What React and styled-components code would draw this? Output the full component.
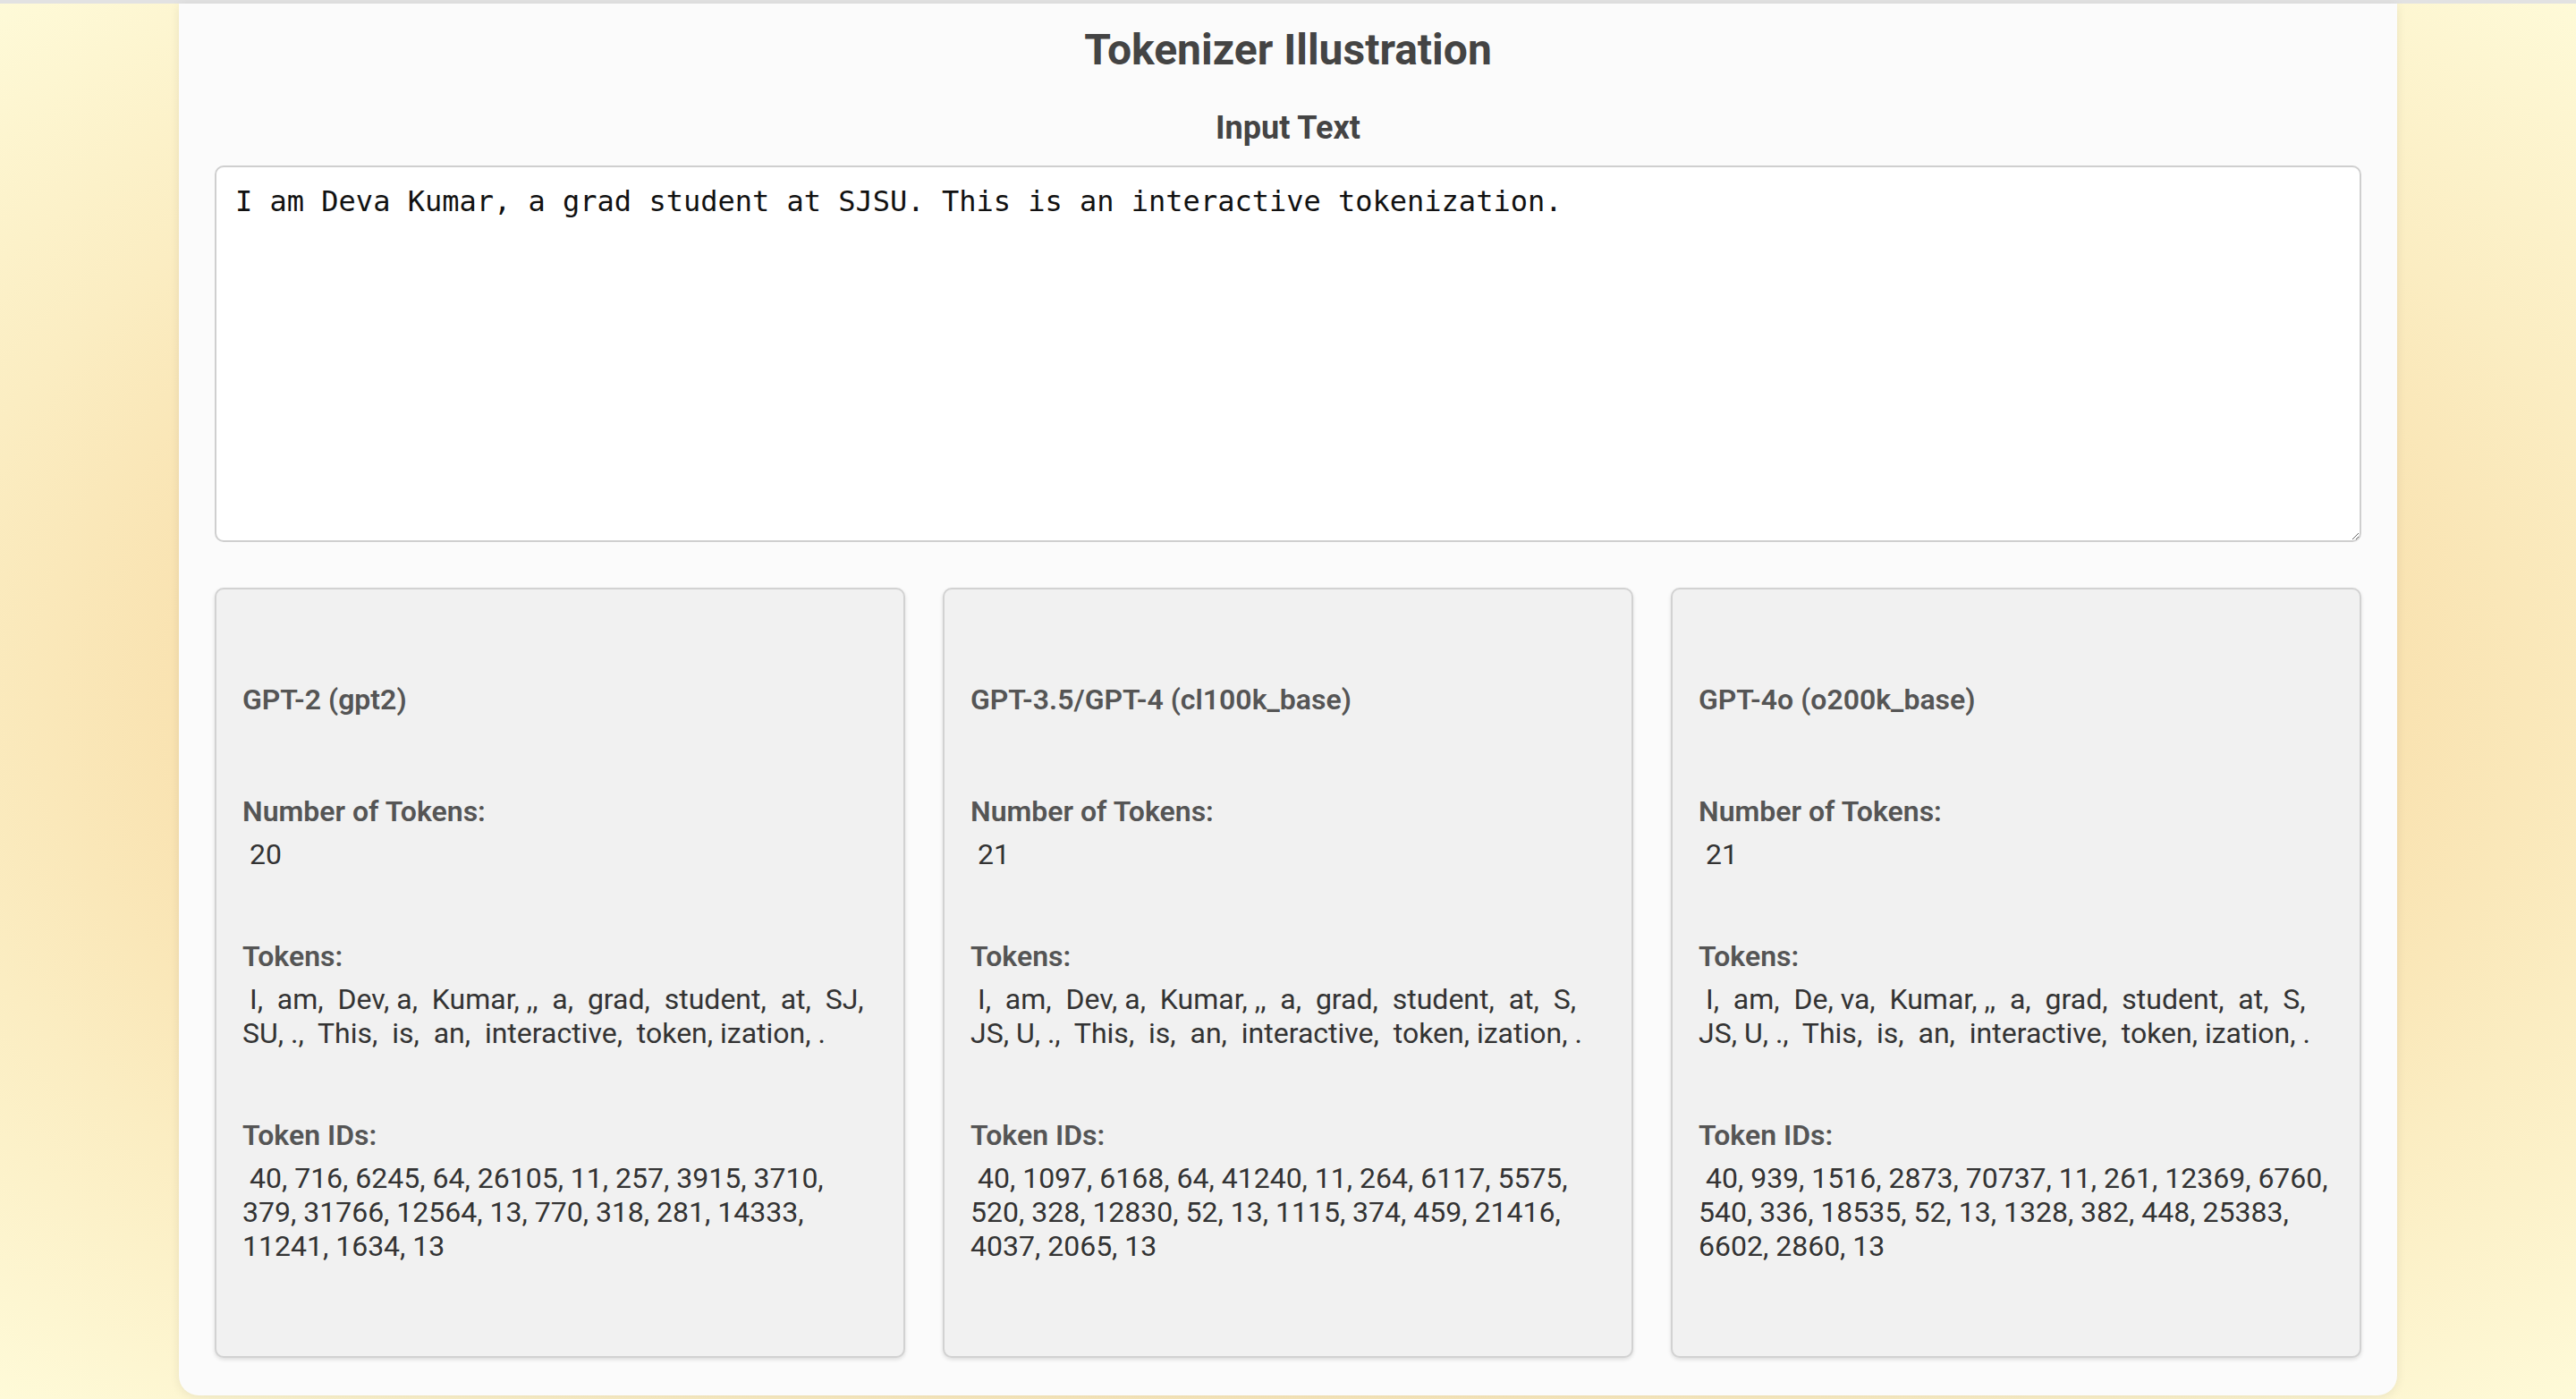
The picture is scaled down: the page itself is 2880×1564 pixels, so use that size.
import React, { useState } from "react";
import styled, { createGlobalStyle } from "styled-components";

const GlobalStyle = createGlobalStyle`
  html, body {
    margin: 0;
    padding: 0;
  }
  body {
    min-height: 100vh;
    font-family: "Roboto", "Liberation Sans", sans-serif;
    background: radial-gradient(ellipse at center, #f6d396 0%, #f9e2b0 60%, #fbedc2 76%, #fefad8 100%);
    background-attachment: fixed;
  }
`;

const TopRule = styled.div`
  height: 4px;
  background: #e2e2e2;
`;

const Page = styled.div`
  display: flex;
  justify-content: center;
  padding-bottom: 3px;
`;

const Container = styled.main`
  width: 2480px;
  box-sizing: border-box;
  background: #fbfbfb;
  border-radius: 0 0 22px 22px;
  box-shadow: 0 2px 12px rgba(0, 0, 0, 0.08);
  padding: 22px 40px 42px;
  display: flex;
  flex-direction: column;
`;

const Title = styled.h1`
  margin: 0;
  text-align: center;
  font-size: 48px;
  line-height: 60px;
  font-weight: 700;
  color: #444;
`;

const SubTitle = styled.h2`
  margin: 35px 0 0;
  text-align: center;
  font-size: 36px;
  line-height: 44px;
  font-weight: 700;
  color: #444;
`;

const TextArea = styled.textarea`
  margin-top: 20px;
  height: 421px;
  box-sizing: border-box;
  width: 100%;
  padding: 19px 21px;
  border: 2px solid #cfcfcf;
  border-radius: 10px;
  background: #fff;
  font-family: "DejaVu Sans Mono", "Liberation Mono", monospace;
  font-size: 32px;
  line-height: 38px;
  color: #111;
  resize: vertical;
  outline: none;
`;

const Grid = styled.div`
  margin-top: 51px;
  display: grid;
  grid-template-columns: repeat(3, 1fr);
  gap: 42px;
`;

const Card = styled.section`
  background: #f1f1f1;
  border: 2px solid #d2d2d2;
  border-radius: 10px;
  box-shadow: 0 2px 4px rgba(0, 0, 0, 0.12);
  padding: 104px 29px;
  display: flex;
  flex-direction: column;
  gap: 76px;
  font-size: 32px;
  line-height: 38px;
`;

const ModelName = styled.h3`
  margin: 0 0 11px;
  font-size: 32px;
  line-height: 38px;
  font-weight: 600;
  color: #555;
`;

const Section = styled.div`
  display: flex;
  flex-direction: column;
  gap: 10px;
`;

const Label = styled.div`
  font-weight: 600;
  color: #555;
`;

const Value = styled.div`
  white-space: pre-wrap;
  color: #333;
`;

const MODELS = [
  {
    name: "GPT-2 (gpt2)",
    tokens: ["I", " am", " Dev", "a", " Kumar", ",", " a", " grad", " student", " at", " SJ", "SU", ".", " This", " is", " an", " interactive", " token", "ization", "."],
    ids: [40, 716, 6245, 64, 26105, 11, 257, 3915, 3710, 379, 31766, 12564, 13, 770, 318, 281, 14333, 11241, 1634, 13],
  },
  {
    name: "GPT-3.5/GPT-4 (cl100k_base)",
    tokens: ["I", " am", " Dev", "a", " Kumar", ",", " a", " grad", " student", " at", " S", "JS", "U", ".", " This", " is", " an", " interactive", " token", "ization", "."],
    ids: [40, 1097, 6168, 64, 41240, 11, 264, 6117, 5575, 520, 328, 12830, 52, 13, 1115, 374, 459, 21416, 4037, 2065, 13],
  },
  {
    name: "GPT-4o (o200k_base)",
    tokens: ["I", " am", " De", "va", " Kumar", ",", " a", " grad", " student", " at", " S", "JS", "U", ".", " This", " is", " an", " interactive", " token", "ization", "."],
    ids: [40, 939, 1516, 2873, 70737, 11, 261, 12369, 6760, 540, 336, 18535, 52, 13, 1328, 382, 448, 25383, 6602, 2860, 13],
  },
];

function ModelCard({ model }) {
  return (
    <Card>
      <ModelName>{model.name}</ModelName>
      <Section>
        <Label>Number of Tokens:</Label>
        <Value>{" " + model.tokens.length}</Value>
      </Section>
      <Section>
        <Label>Tokens:</Label>
        <Value>{" " + model.tokens.join(", ")}</Value>
      </Section>
      <Section>
        <Label>Token IDs:</Label>
        <Value>{" " + model.ids.join(", ")}</Value>
      </Section>
    </Card>
  );
}

export default function App() {
  const [text, setText] = useState(
    "I am Deva Kumar, a grad student at SJSU. This is an interactive tokenization."
  );

  return (
    <>
      <GlobalStyle />
      <TopRule />
      <Page>
        <Container>
          <Title>Tokenizer Illustration</Title>
          <SubTitle>Input Text</SubTitle>
          <TextArea value={text} onChange={(e) => setText(e.target.value)} />
          <Grid>
            {MODELS.map((model) => (
              <ModelCard key={model.name} model={model} />
            ))}
          </Grid>
        </Container>
      </Page>
    </>
  );
}
